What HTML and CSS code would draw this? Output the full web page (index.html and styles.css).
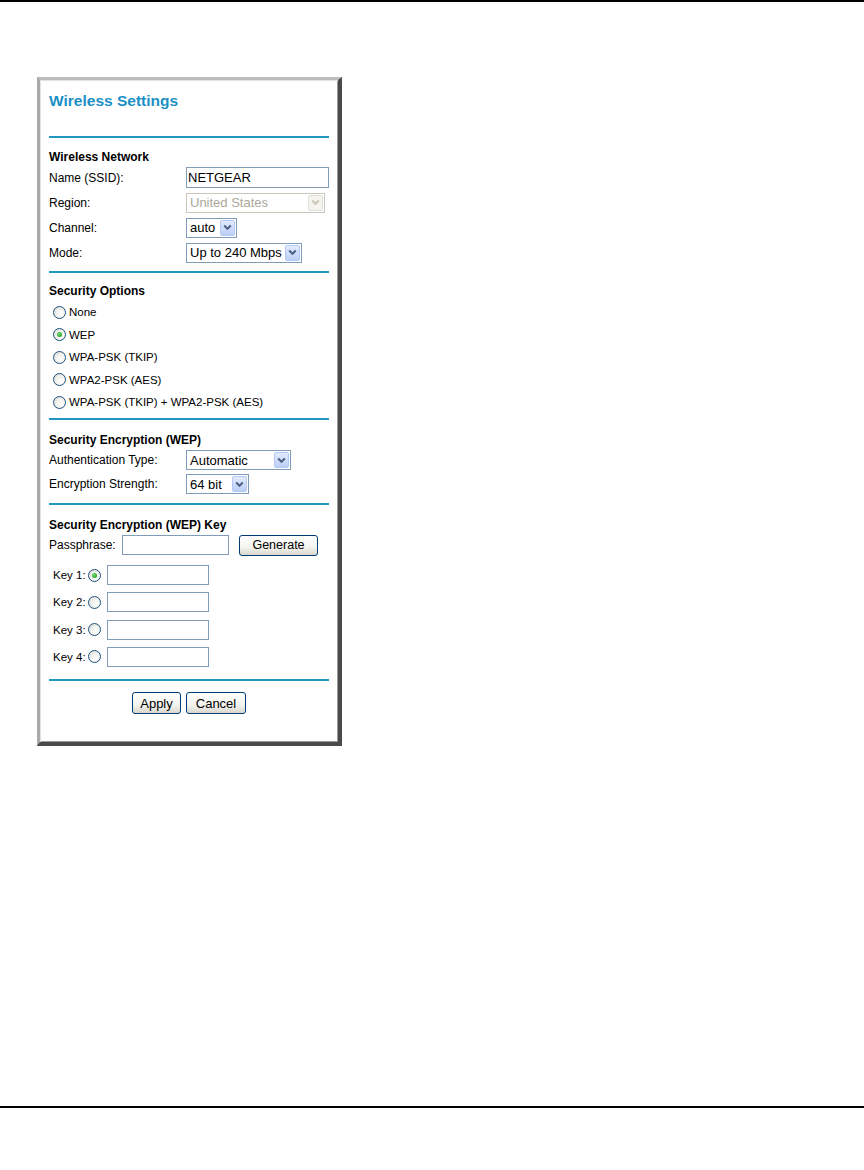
FILE: index.html
```html
<!DOCTYPE html>
<html>
<head>
<meta charset="utf-8">
<title>Wireless Settings</title>
<link rel="stylesheet" href="styles.css">
</head>
<body>
<div class="top-rule"></div>
<div class="panel">
  <h1 class="title">Wireless Settings</h1>
  <div class="rule r1"></div>

  <h3 class="head h-net">Wireless Network</h3>
  <div class="rows rows-net">
    <div class="row"><span class="lbl">Name (SSID):</span><input class="text ssid" type="text" value="NETGEAR"></div>
    <div class="row"><span class="lbl">Region:</span>
      <div class="select disabled w-region"><span class="val">United States</span><span class="arrow"><svg width="9" height="7" viewBox="0 0 9 7"><path d="M1.2 1.5 L4.5 4.8 L7.8 1.5" fill="none" stroke="currentColor" stroke-width="2"/></svg></span></div>
    </div>
    <div class="row"><span class="lbl">Channel:</span>
      <div class="select w-channel"><span class="val">auto</span><span class="arrow"><svg width="9" height="7" viewBox="0 0 9 7"><path d="M1.2 1.5 L4.5 4.8 L7.8 1.5" fill="none" stroke="currentColor" stroke-width="2"/></svg></span></div>
    </div>
    <div class="row"><span class="lbl">Mode:</span>
      <div class="select w-mode"><span class="val">Up to 240 Mbps</span><span class="arrow"><svg width="9" height="7" viewBox="0 0 9 7"><path d="M1.2 1.5 L4.5 4.8 L7.8 1.5" fill="none" stroke="currentColor" stroke-width="2"/></svg></span></div>
    </div>
  </div>
  <div class="rule r2"></div>

  <h3 class="head h-sec">Security Options</h3>
  <div class="radios">
    <div class="radio-row"><span class="radio"></span><span>None</span></div>
    <div class="radio-row"><span class="radio checked"></span><span>WEP</span></div>
    <div class="radio-row"><span class="radio"></span><span>WPA-PSK (TKIP)</span></div>
    <div class="radio-row"><span class="radio"></span><span>WPA2-PSK (AES)</span></div>
    <div class="radio-row"><span class="radio"></span><span>WPA-PSK (TKIP) + WPA2-PSK (AES)</span></div>
  </div>
  <div class="rule r3"></div>

  <h3 class="head h-enc">Security Encryption (WEP)</h3>
  <div class="rows rows-enc">
    <div class="row"><span class="lbl">Authentication Type:</span>
      <div class="select w-auth"><span class="val">Automatic</span><span class="arrow"><svg width="9" height="7" viewBox="0 0 9 7"><path d="M1.2 1.5 L4.5 4.8 L7.8 1.5" fill="none" stroke="currentColor" stroke-width="2"/></svg></span></div>
    </div>
    <div class="row"><span class="lbl">Encryption Strength:</span>
      <div class="select w-strength"><span class="val">64 bit</span><span class="arrow"><svg width="9" height="7" viewBox="0 0 9 7"><path d="M1.2 1.5 L4.5 4.8 L7.8 1.5" fill="none" stroke="currentColor" stroke-width="2"/></svg></span></div>
    </div>
  </div>
  <div class="rule r4"></div>

  <h3 class="head h-key">Security Encryption (WEP) Key</h3>
  <div class="pass-row">
    <span class="pass-lbl">Passphrase:</span>
    <input class="text pass" type="text" value="">
    <button class="btn gen">Generate</button>
  </div>
  <div class="keys">
    <div class="key-row"><span class="key-lbl">Key 1:</span><span class="radio checked"></span><input class="text key" type="text" value=""></div>
    <div class="key-row"><span class="key-lbl">Key 2:</span><span class="radio"></span><input class="text key" type="text" value=""></div>
    <div class="key-row"><span class="key-lbl">Key 3:</span><span class="radio"></span><input class="text key" type="text" value=""></div>
    <div class="key-row"><span class="key-lbl">Key 4:</span><span class="radio"></span><input class="text key" type="text" value=""></div>
  </div>
  <div class="rule r5"></div>

  <div class="actions">
    <button class="btn apply">Apply</button>
    <button class="btn cancel">Cancel</button>
  </div>
</div>
<div class="bottom-rule"></div>
</body>
</html>
```

FILE: styles.css
```css
html, body {
  margin: 0;
  padding: 0;
  background: #fff;
}
body {
  font-family: "Liberation Sans", Arial, sans-serif;
  font-size: 12px;
  color: #000;
  width: 864px;
  height: 1170px;
  overflow: hidden;
}
.top-rule {
  height: 2px;
  background: #000;
}
.bottom-rule {
  height: 2px;
  background: #000;
  margin-top: 360px;
}
.panel {
  margin: 75px 0 0 37px;
  width: 305px;
  height: 669px;
  box-sizing: border-box;
  border-style: solid;
  border-width: 3px 4px 4px 3px;
  border-color: #bdbdbd #4a4a4a #4a4a4a #a9a9a9;
  box-shadow: inset 1px 1px 0 #e2e2e2, inset -1px -1px 0 #9a9a9a;
  padding: 12px 9px 0 9px;
  background: #fff;
}
.title {
  margin: 0;
  font-size: 15.5px;
  line-height: 18px;
  font-weight: bold;
  color: #1a90c6;
}
.rule {
  height: 2px;
  width: 280px;
  background: #2297c0;
}
.r1 { margin-top: 26px; }
.r2 { margin-top: 8px; }
.r3 { margin-top: 4px; }
.r4 { margin-top: 8px; }
.r5 { margin-top: 12px; }

.head {
  margin: 0;
  font-size: 12px;
  line-height: 14px;
  font-weight: bold;
}
.h-net { margin-top: 12px; }
.h-sec { margin-top: 11px; }
.h-enc { margin-top: 13px; }
.h-key { margin-top: 13px; }

.rows {
  display: flex;
  flex-direction: column;
}
.rows-net { margin-top: 3px; gap: 4px; }
.rows-enc { margin-top: 3px; gap: 3px; }
.row {
  display: flex;
  align-items: center;
  height: 21px;
}
.lbl {
  width: 137px;
  flex: none;
}

.text {
  box-sizing: border-box;
  border: 1px solid #7f9db9;
  background: #fff;
  font-family: "Liberation Sans", Arial, sans-serif;
  font-size: 13px;
  color: #000;
  padding: 0 1px;
  margin: 0;
  outline: none;
}
.ssid { width: 143px; height: 21px; }
.pass { width: 107px; height: 20px; }
.key { width: 102px; height: 20px; }

.select {
  box-sizing: border-box;
  height: 20px;
  border: 1px solid #7f9db9;
  background: #fff;
  display: flex;
  align-items: center;
  justify-content: space-between;
  font-size: 13px;
  padding: 0 1px 0 3px;
}
.select .val {
  white-space: nowrap;
  overflow: hidden;
}
.select .arrow {
  box-sizing: border-box;
  width: 15px;
  height: 16px;
  flex: none;
  display: flex;
  align-items: center;
  justify-content: center;
  border: 1px solid #b4c8f4;
  border-radius: 2px;
  background: linear-gradient(#e2ebfe, #bccff8);
  color: #4d6185;
}
.select.disabled {
  border-color: #c9c7ba;
}
.select.disabled .val {
  color: #aca899;
}
.select.disabled .arrow {
  border-color: #e1e0d8;
  background: #f5f4ee;
  color: #c9c7ba;
}
.w-region { width: 139px; }
.w-channel { width: 51px; }
.w-mode { width: 116px; }
.w-auth { width: 105px; }
.w-strength { width: 63px; }

.radios {
  margin-top: 3px;
  display: flex;
  flex-direction: column;
  font-size: 11.5px;
}
.radio-row {
  height: 22.5px;
  display: flex;
  align-items: center;
  gap: 3px;
  padding-left: 4px;
}
.radio {
  box-sizing: border-box;
  width: 13px;
  height: 13px;
  border-radius: 50%;
  border: 1px solid #1c5180;
  background: radial-gradient(circle at 65% 65%, #ffffff 0%, #f2f2ee 45%, #d6d5cc 100%);
  flex: none;
  position: relative;
}
.radio.checked::after {
  content: "";
  position: absolute;
  left: 3px;
  top: 3px;
  width: 5px;
  height: 5px;
  border-radius: 50%;
  background: radial-gradient(circle at 40% 40%, #7be07b, #21a121 70%);
}

.pass-row {
  margin-top: 3px;
  display: flex;
  align-items: center;
  height: 21px;
}
.pass-lbl { width: 73px; flex: none; }
.btn {
  box-sizing: border-box;
  margin: 0;
  padding: 0;
  border: 1px solid #003c74;
  border-radius: 3px;
  background: linear-gradient(#ffffff, #f3f3ee 60%, #d9d7cc);
  font-family: "Liberation Sans", Arial, sans-serif;
  font-size: 12.5px;
  color: #000;
  height: 21px;
}
.gen { width: 79px; margin-left: 10px; }

.keys {
  margin-top: 9px;
  display: flex;
  flex-direction: column;
  gap: 6.3px;
}
.key-row {
  display: flex;
  align-items: center;
  height: 21px;
  padding-left: 4px;
}
.key-lbl { width: 35px; flex: none; font-size: 11.5px; }
.key-row .radio { margin-right: 6px; }

.actions {
  margin-top: 11px;
  display: flex;
  justify-content: center;
  gap: 5px;
  width: 280px;
}
.apply { width: 49px; height: 22px; font-size: 13px; }
.cancel { width: 60px; height: 22px; font-size: 13px; }
```
